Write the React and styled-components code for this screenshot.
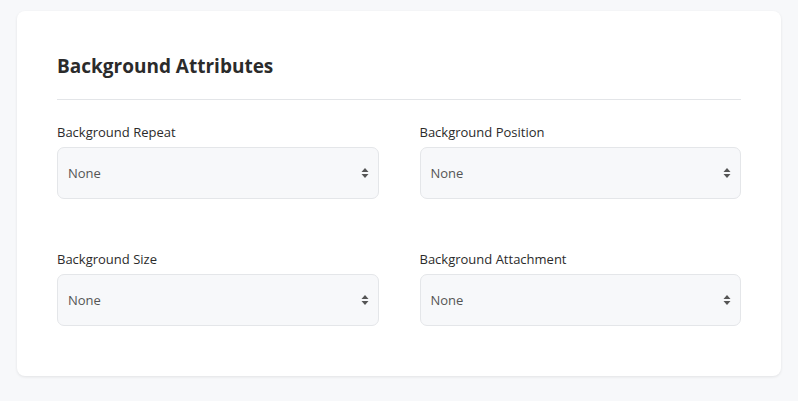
import styled, { createGlobalStyle } from "styled-components";

const GlobalStyle = createGlobalStyle`
	body {
		margin: 0;
		background: #f7f8fa;
		font-family: "Open Sans", "Noto Sans", sans-serif;
		color: #2b2b2b;
	}
`;

const fields = [
	["Background Repeat", "Background Position"],
	["Background Size", "Background Attachment"],
];

const Arrows = () => (
	<svg width="8" height="12" viewBox="0 0 8 12">
		<path d="M4 1 L7.5 5 L0.5 5 Z" fill="#555" />
		<path d="M4 11 L7.5 7 L0.5 7 Z" fill="#555" />
	</svg>
);

const SelectField = ({ label }) => (
	<Field>
		<Label>{label}</Label>
		<SelectWrap>
			<Select defaultValue="none">
				<option value="none">None</option>
			</Select>
			<ArrowBox>
				<Arrows />
			</ArrowBox>
		</SelectWrap>
	</Field>
);

const App = () => {
	return (
		<Page>
			<GlobalStyle />
			<Card>
				<Title>Background Attributes</Title>
				<Divider />
				<Grid>
					{fields.flat().map((f) => (
						<SelectField key={f} label={f} />
					))}
				</Grid>
			</Card>
		</Page>
	);
};

export default App;

const Page = styled.div`
	padding: 11px 17px 25px 17px;
`;

const Card = styled.div`
	background: #fff;
	border-radius: 8px;
	box-shadow: 0 1px 3px rgba(0, 0, 0, 0.09);
	padding: 43px 40px 50px 40px;
`;

const Title = styled.h2`
	margin: 0;
	font-size: 19px;
	line-height: 24px;
	font-weight: 700;
	color: #2b2b2b;
`;

const Divider = styled.hr`
	border: none;
	border-top: 1px solid #e3e5e8;
	margin: 21px 0 23px 0;
`;

const Grid = styled.div`
	display: grid;
	grid-template-columns: 1fr 1fr;
	column-gap: 41px;
	row-gap: 51px;
`;

const Field = styled.div`
	display: flex;
	flex-direction: column;
`;

const Label = styled.label`
	font-size: 13px;
	line-height: 18px;
	color: #2b2b2b;
	margin-bottom: 6px;
`;

const SelectWrap = styled.div`
	position: relative;
`;

const Select = styled.select`
	appearance: none;
	width: 100%;
	height: 52px;
	box-sizing: border-box;
	background: #f7f8fa;
	border: 1px solid #e4e6e9;
	border-radius: 7px;
	padding: 0 30px 0 10px;
	font-family: "Open Sans", "Noto Sans", sans-serif;
	font-size: 13px;
	color: #555;
	outline: none;
`;

const ArrowBox = styled.span`
	position: absolute;
	right: 10px;
	top: 50%;
	transform: translateY(-50%);
	display: flex;
	pointer-events: none;
`;
